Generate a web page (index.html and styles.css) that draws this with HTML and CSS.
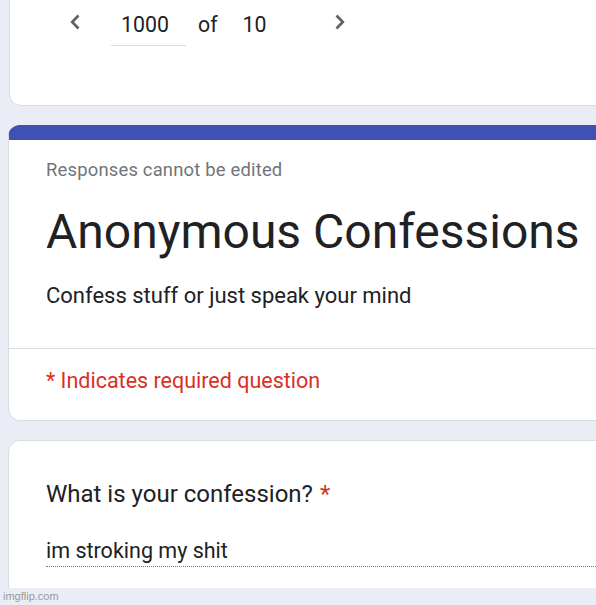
FILE: index.html
```html
<!DOCTYPE html>
<html>
<head>
<meta charset="utf-8">
<link rel="stylesheet" href="styles.css">
</head>
<body>
<div class="shot">
  <div class="page">
    <div class="card pager-card">
      <div class="pager">
        <span class="chev left"><svg width="14" height="18" viewBox="0 0 14 18"><polyline points="10.5,2.5 4.2,9 10.5,15.5" fill="none" stroke="#5f6368" stroke-width="2.7"/></svg></span>
        <span class="page-input">1000</span>
        <span class="of">of</span>
        <span class="total">10</span>
        <span class="chev right"><svg width="14" height="18" viewBox="0 0 14 18"><polyline points="3.5,2.5 9.8,9 3.5,15.5" fill="none" stroke="#5f6368" stroke-width="2.7"/></svg></span>
      </div>
    </div>
    <div class="card header-card">
      <div class="header-top">
        <div class="note">Responses cannot be edited</div>
        <div class="title">Anonymous Confessions</div>
        <div class="desc">Confess stuff or just speak your mind</div>
      </div>
      <div class="required">* Indicates required question</div>
    </div>
    <div class="card question-card">
      <div class="question">What is your confession? <span class="star">*</span></div>
      <div class="answer">im stroking my shit</div>
    </div>
  </div>
  <div class="footer">imgflip.com</div>
</div>
</body>
</html>
```
FILE: styles.css
```css
html, body {
  margin: 0;
  padding: 0;
  background: #eaedf5;
  overflow: hidden;
}
.shot {
  width: 596px;
  height: 605px;
  display: flex;
  flex-direction: column;
  overflow: hidden;
  font-family: Roboto, "Liberation Sans", sans-serif;
  color: #202124;
}
.page {
  height: 588px;
  overflow: hidden;
  padding-left: 8px;
  display: flex;
  flex-direction: column;
  gap: 19px;
}
.card {
  background: #fff;
  border: 1px solid #dadce0;
  border-radius: 12px;
  width: 640px;
  flex-shrink: 0;
  box-sizing: border-box;
}
.pager-card {
  margin-left: 1px;
  margin-top: -20px;
  height: 126px;
  padding-top: 19px;
}
.pager {
  display: flex;
  align-items: flex-start;
  font-size: 21.3px;
  line-height: 28px;
  color: #202124;
}
.chev {
  display: flex;
  width: 14px;
  height: 18px;
  margin-top: 13px;
}
.chev.left { margin-left: 58px; }
.page-input {
  margin-left: 29px;
  margin-top: 11px;
  width: 75px;
  box-sizing: border-box;
  padding: 0 0 6px 10px;
  border-bottom: 1px solid #dadce0;
}
.of { margin-left: 12px; margin-top: 11px; }
.total { margin-left: 25px; margin-top: 11px; }
.chev.right { margin-left: 66px; }
.header-card {
  border-top: 15px solid #3f51b5;
  height: 296px;
}
.header-top {
  padding: 18px 0 38px 37px;
  border-bottom: 1px solid #dadce0;
}
.note {
  font-size: 18.4px;
  line-height: 24px;
  color: #70757a;
  letter-spacing: 0.2px;
}
.title {
  font-size: 48px;
  line-height: 56px;
  margin-top: 22px;
}
.desc {
  font-size: 22px;
  line-height: 28px;
  margin-top: 22px;
}
.required {
  font-size: 21.5px;
  line-height: 26px;
  color: #d93025;
  padding: 19px 0 0 37px;
}
.question-card {
  height: 200px;
  margin-top: 0;
  padding: 39px 0 0 37px;
}
.question {
  font-size: 24px;
  line-height: 28px;
}
.star { color: #d93025; margin-left: 1px; }
.answer {
  margin-top: 29px;
  font-size: 21.5px;
  line-height: 28px;
  width: 600px;
  padding-bottom: 1px;
  border-bottom: 1px dotted #777;
}
.footer {
  height: 17px;
  font-family: "Liberation Sans", Arial, sans-serif;
  font-size: 11px;
  line-height: 17px;
  color: #9a9a9a;
  padding-left: 3px;
}
```
